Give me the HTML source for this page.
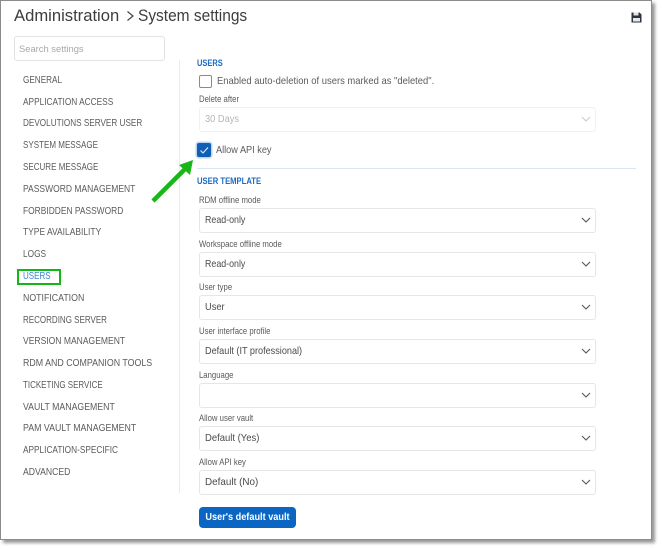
<!DOCTYPE html>
<html><head><meta charset="utf-8">
<style>
html,body{margin:0;padding:0;width:662px;height:550px;background:#fff;overflow:hidden}
body{position:relative;font-family:"Liberation Sans",sans-serif;color:#555;filter:blur(.3px)}
.a{position:absolute;white-space:nowrap}
#frame{position:absolute;left:0;top:0;width:650px;height:538px;border:1px solid #8c8c8c;background:#fff;box-shadow:3px 3px 3px #9a9a9a}
.n{position:absolute;left:23px;font-size:10px;line-height:14px;height:14px;color:#5c5c5c;white-space:nowrap;transform-origin:0 50%}
.l{position:absolute;left:199px;font-size:8.8px;line-height:12px;color:#5a5a5a;white-space:nowrap;transform:scaleX(.88);transform-origin:0 50%}
.s{position:absolute;left:199px;width:395px;height:22.500px;border:1px solid #e6e6e6;border-radius:3px;background:#fff}
.s span{position:absolute;left:5px;top:0;line-height:23px;font-size:10.3px;color:#4a4a4a;transform-origin:0 50%;white-space:nowrap}
.s svg{position:absolute;left:380.500px;top:8px}
.h{position:absolute;left:197px;font-size:8.8px;font-weight:bold;color:#1a6cc4;line-height:12px;white-space:nowrap;transform-origin:0 50%}
</style></head>
<body>
<div id="frame"></div>
<div class="a" style="left:14px;top:6px;font-size:16.3px;line-height:20px;color:#3d3d3d;transform:scaleX(1.02);transform-origin:0 50%">Administration</div>
<svg class="a" style="left:126px;top:10px" width="9" height="12"><path d="M1.500 1.500L7 6L1.500 10.500" fill="none" stroke="#444" stroke-width="1.200"/></svg>
<div class="a" style="left:138px;top:6px;font-size:16.3px;line-height:20px;color:#3d3d3d;transform:scaleX(.95);transform-origin:0 50%">System settings</div>
<svg class="a" style="left:631px;top:12px" width="11" height="11" viewBox="0 0 11 11"><path d="M0.500 0.500H8.500L10.500 2.500V10.500H0.500Z" fill="#2b3440"/><rect x="2.500" y="0.500" width="5" height="3" fill="#dfe3e6"/><rect x="2" y="6" width="7" height="3.500" fill="#e8e8e8"/></svg>
<div class="a" style="left:14px;top:36px;width:149px;height:23px;border:1px solid #e2e2e2;border-radius:3px"></div>
<div class="a" style="left:19px;top:41.500px;font-size:9.4px;line-height:14px;color:#a8a8a8">Search settings</div>
<div class="a" style="left:179px;top:60px;width:1px;height:433px;background:#ececec"></div>

<div class="n" style="top:73.500px;transform:scaleX(.817)">GENERAL</div>
<div class="n" style="top:95.500px;transform:scaleX(.83)">APPLICATION ACCESS</div>
<div class="n" style="top:117px;transform:scaleX(.817)">DEVOLUTIONS SERVER USER</div>
<div class="n" style="top:138.500px;transform:scaleX(.803)">SYSTEM MESSAGE</div>
<div class="n" style="top:160.500px;transform:scaleX(.803)">SECURE MESSAGE</div>
<div class="n" style="top:182.500px;transform:scaleX(.851)">PASSWORD MANAGEMENT</div>
<div class="n" style="top:204.500px;transform:scaleX(.841)">FORBIDDEN PASSWORD</div>
<div class="n" style="top:226px;transform:scaleX(.846)">TYPE AVAILABILITY</div>
<div class="n" style="top:247.500px;transform:scaleX(.831)">LOGS</div>
<div class="a" style="left:17px;top:268.500px;width:40px;height:12px;border:2px solid #14b814"></div>
<div class="n" style="top:269.500px;color:#3d86d6;transform:scaleX(.8)">USERS</div>
<div class="n" style="top:291.500px;transform:scaleX(.878)">NOTIFICATION</div>
<div class="n" style="top:313.500px;transform:scaleX(.801)">RECORDING SERVER</div>
<div class="n" style="top:335px;transform:scaleX(.855)">VERSION MANAGEMENT</div>
<div class="n" style="top:357px;transform:scaleX(.884)">RDM AND COMPANION TOOLS</div>
<div class="n" style="top:378.500px;transform:scaleX(.798)">TICKETING SERVICE</div>
<div class="n" style="top:400.500px;transform:scaleX(.874)">VAULT MANAGEMENT</div>
<div class="n" style="top:422px;transform:scaleX(.88)">PAM VAULT MANAGEMENT</div>
<div class="n" style="top:444px;transform:scaleX(.827)">APPLICATION-SPECIFIC</div>
<div class="n" style="top:465.500px;transform:scaleX(.865)">ADVANCED</div>

<div class="h" style="top:57px;transform:scaleX(.85)">USERS</div>
<div class="a" style="left:199px;top:75px;width:11px;height:11px;border:1.500px solid #8a8a8a;border-radius:2px"></div>
<div class="a" style="left:217px;top:74.500px;font-size:10.3px;line-height:14px;color:#5c5c5c;transform:scaleX(.915);transform-origin:0 50%">Enabled auto-deletion of users marked as "deleted".</div>
<div class="l" style="top:93px">Delete after</div>
<div class="s" style="top:107px;border-color:#f1f1f1"><span style="color:#b5b5b5;transform:scaleX(.9)">30 Days</span><svg width="10" height="7"><path d="M1 1L5 5L9 1" fill="none" stroke="#c8c8c8" stroke-width="1"/></svg></div>
<div class="a" style="left:197px;top:143px;width:14px;height:14px;background:#0f5fb5;border-radius:2px;box-shadow:0 0 0 1.500px #b9d6f2"></div>
<svg class="a" style="left:197px;top:143px" width="14" height="14"><path d="M3.500 7.500L6 10L11 4.500" fill="none" stroke="#e6f0fa" stroke-width="1.100"/></svg>
<div class="a" style="left:216px;top:143.500px;font-size:10.3px;line-height:14px;color:#5c5c5c;transform:scaleX(.89);transform-origin:0 50%">Allow API key</div>
<div class="a" style="left:197px;top:168px;width:439px;height:1px;background:#d5e7f7"></div>
<svg class="a" style="left:150px;top:158px" width="46" height="48"><path d="M3 43L35 11" stroke="#19b619" stroke-width="4.500" fill="none"/><path d="M43 2L29 7L40 17Z" fill="#19b619"/></svg>
<div class="h" style="top:175px;transform:scaleX(.87)">USER TEMPLATE</div>

<div class="l" style="top:194px">RDM offline mode</div>
<div class="s" style="top:208px"><span style="transform:scaleX(.86)">Read-only</span><svg width="10" height="7"><path d="M1 1L5 5L9 1" fill="none" stroke="#555" stroke-width="1.100"/></svg></div>
<div class="l" style="top:238px">Workspace offline mode</div>
<div class="s" style="top:252px"><span style="transform:scaleX(.86)">Read-only</span><svg width="10" height="7"><path d="M1 1L5 5L9 1" fill="none" stroke="#555" stroke-width="1.100"/></svg></div>
<div class="l" style="top:281px">User type</div>
<div class="s" style="top:295px"><span style="transform:scaleX(.9)">User</span><svg width="10" height="7"><path d="M1 1L5 5L9 1" fill="none" stroke="#555" stroke-width="1.100"/></svg></div>
<div class="l" style="top:325px">User interface profile</div>
<div class="s" style="top:339px"><span style="transform:scaleX(.885)">Default (IT professional)</span><svg width="10" height="7"><path d="M1 1L5 5L9 1" fill="none" stroke="#555" stroke-width="1.100"/></svg></div>
<div class="l" style="top:369px">Language</div>
<div class="s" style="top:383px"><svg width="10" height="7"><path d="M1 1L5 5L9 1" fill="none" stroke="#555" stroke-width="1.100"/></svg></div>
<div class="l" style="top:412px">Allow user vault</div>
<div class="s" style="top:426px"><span style="transform:scaleX(.92)">Default (Yes)</span><svg width="10" height="7"><path d="M1 1L5 5L9 1" fill="none" stroke="#555" stroke-width="1.100"/></svg></div>
<div class="l" style="top:456px">Allow API key</div>
<div class="s" style="top:470px"><span style="transform:scaleX(.96)">Default (No)</span><svg width="10" height="7"><path d="M1 1L5 5L9 1" fill="none" stroke="#555" stroke-width="1.100"/></svg></div>

<div class="a" style="left:199px;top:507px;width:97px;height:21px;background:#0b66c3;border-radius:4px"></div>
<div class="a" style="left:199px;top:507px;width:97px;height:21px;color:#fff;font-size:10.3px;font-weight:bold;line-height:21px;text-align:center;transform:scaleX(.89)">User's default vault</div>
</body></html>
